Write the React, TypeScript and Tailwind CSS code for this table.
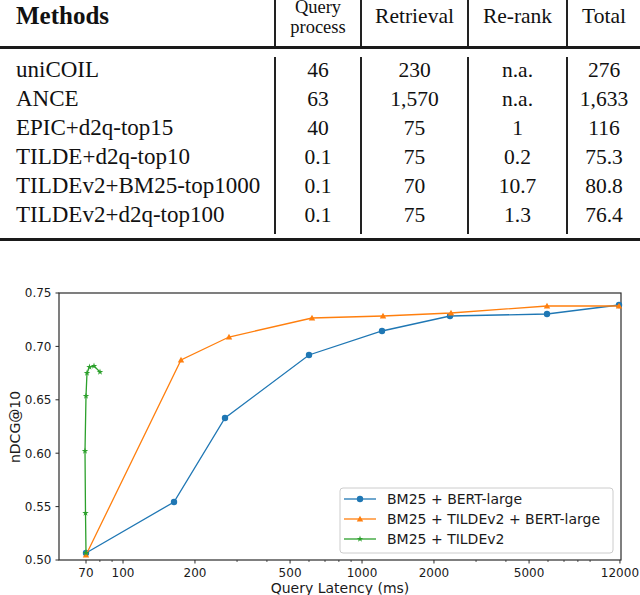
import React from "react";

const rows: string[][] = [
  ["uniCOIL", "46", "230", "n.a.", "276"],
  ["ANCE", "63", "1,570", "n.a.", "1,633"],
  ["EPIC+d2q-top15", "40", "75", "1", "116"],
  ["TILDE+d2q-top10", "0.1", "75", "0.2", "75.3"],
  ["TILDEv2+BM25-top1000", "0.1", "70", "10.7", "80.8"],
  ["TILDEv2+d2q-top100", "0.1", "75", "1.3", "76.4"],
];

const serif = { fontFamily: '"Liberation Serif", "DejaVu Serif", serif' };
const sans = '"DejaVu Sans", "Liberation Sans", sans-serif';

const X = (v: number) => 86 + 239 * Math.log10(v / 70);
const Y = (v: number) => 560 - ((v - 0.5) / 0.25) * 267;

const BLUE = "#1f77b4";
const ORANGE = "#ff7f0e";
const GREEN = "#2ca02c";

const blue: [number, number][] = [
  [86, 553], [174, 502], [225, 418], [309, 355], [382, 331], [450, 316], [547, 314], [619, 305],
];
const orange: [number, number][] = [
  [86, 555], [181, 360], [229, 337], [312, 318], [383, 316], [451, 313], [547, 306], [619, 306],
];
const green: [number, number][] = [
  [86, 553], [85.5, 513], [85, 451], [86, 396], [87, 373], [89.5, 367], [94, 366], [100, 372],
];

function starPts(cx: number, cy: number, R: number) {
  const pts: string[] = [];
  for (let i = 0; i < 10; i++) {
    const a = ((-90 + i * 36) * Math.PI) / 180;
    const r = i % 2 ? R * 0.382 : R;
    pts.push(`${(cx + r * Math.cos(a)).toFixed(2)},${(cy + r * Math.sin(a)).toFixed(2)}`);
  }
  return pts.join(" ");
}

function triPts(cx: number, cy: number, s: number) {
  return `${cx},${cy - s} ${cx + s},${cy + s * 0.8} ${cx - s},${cy + s * 0.8}`;
}

const path = (p: [number, number][]) => p.map((q, i) => `${i ? "L" : "M"}${q[0]},${q[1]}`).join(" ");

function Chart() {
  const yTicks = [0.5, 0.55, 0.6, 0.65, 0.7, 0.75];
  const xMajor = [70, 100, 200, 500, 1000, 2000, 5000, 12000];
  const xMinor = [80, 90, 300, 400, 600, 700, 800, 900, 3000, 4000, 6000, 7000, 8000, 9000];
  return (
    <svg width={640} height={354} viewBox="0 241 640 354" className="block">
      <rect x={59} y={293} width={562} height={267} fill="white" stroke="#2a2a2a" strokeWidth={1.2} />
      {yTicks.map((t) => (
        <g key={t}>
          <line x1={55.5} x2={59} y1={Y(t)} y2={Y(t)} stroke="#2a2a2a" strokeWidth={1} />
          <text x={51.5} y={Y(t) + 4.3} textAnchor="end" fontFamily={sans} fontSize={12} fill="#1a1a1a">
            {t.toFixed(2)}
          </text>
        </g>
      ))}
      {xMajor.map((t) => (
        <g key={t}>
          <line x1={X(t)} x2={X(t)} y1={560} y2={563.5} stroke="#2a2a2a" strokeWidth={1} />
          <text x={X(t)} y={576.5} textAnchor="middle" fontFamily={sans} fontSize={12} fill="#1a1a1a">
            {t}
          </text>
        </g>
      ))}
      {xMinor.map((t) => (
        <line key={t} x1={X(t)} x2={X(t)} y1={560} y2={562} stroke="#2a2a2a" strokeWidth={0.8} />
      ))}
      <text x={340} y={593} textAnchor="middle" fontFamily={sans} fontSize={14} fill="#1a1a1a">
        Query Latency (ms)
      </text>
      <text
        transform="translate(19.5,427) rotate(-90)"
        textAnchor="middle"
        fontFamily={sans}
        fontSize={14}
        fill="#1a1a1a"
      >
        nDCG@10
      </text>

      <path d={path(blue)} fill="none" stroke={BLUE} strokeWidth={1.3} />
      {blue.map((p, i) => (
        <circle key={i} cx={p[0]} cy={p[1]} r={3.2} fill={BLUE} />
      ))}
      <path d={path(orange)} fill="none" stroke={ORANGE} strokeWidth={1.3} />
      {orange.map((p, i) => (
        <polygon key={i} points={triPts(p[0], p[1], 3.2)} fill={ORANGE} />
      ))}
      <path d={path(green)} fill="none" stroke={GREEN} strokeWidth={1.3} />
      {green.map((p, i) => (
        <polygon key={i} points={starPts(p[0], p[1], 3.4)} fill={GREEN} />
      ))}

      <rect x={340} y={488} width={273} height={65} rx={3} fill="white" fillOpacity={0.85} stroke="#cccccc" strokeWidth={1} />
      <line x1={344} x2={376} y1={499} y2={499} stroke={BLUE} strokeWidth={1.3} />
      <circle cx={360} cy={499} r={3.2} fill={BLUE} />
      <text x={387} y={503.5} fontFamily={sans} fontSize={14} fill="#1a1a1a">BM25 + BERT-large</text>
      <line x1={344} x2={376} y1={519} y2={519} stroke={ORANGE} strokeWidth={1.3} />
      <polygon points={triPts(360, 519, 3.2)} fill={ORANGE} />
      <text x={387} y={523.5} fontFamily={sans} fontSize={14} fill="#1a1a1a">BM25 + TILDEv2 + BERT-large</text>
      <line x1={344} x2={376} y1={539} y2={539} stroke={GREEN} strokeWidth={1.3} />
      <polygon points={starPts(360, 539, 3.4)} fill={GREEN} />
      <text x={387} y={543.5} fontFamily={sans} fontSize={14} fill="#1a1a1a">BM25 + TILDEv2</text>
    </svg>
  );
}

function Table() {
  const numCols = [1, 2, 3, 4];
  const widths = ["w-[86px]", "w-[107px]", "w-[99px]", "w-[74px]"];
  return (
    <div style={serif} className="text-[#111]">
      {/* header */}
      <div className="flex h-[49px] border-b-[3px] border-[#1a1a1a] overflow-visible">
        <div className="w-[274px] pl-[16px] pt-[3px] text-[25px] leading-none font-bold">Methods</div>
        <div className="w-[86px] border-l-2 border-[#222] flex flex-col items-center text-[18.5px] leading-[20px] -mt-[3px]">
          <span>Query</span>
          <span>process</span>
        </div>
        <div className="w-[107px] border-l-2 border-[#222] flex justify-center pt-[6px] text-[21.5px] leading-none">Retrieval</div>
        <div className="w-[99px] border-l-2 border-[#222] flex justify-center pt-[6px] text-[21.5px] leading-none">Re-rank</div>
        <div className="w-[74px] border-l-2 border-[#222] flex justify-center pt-[6px] text-[21.5px] leading-none">Total</div>
      </div>
      {/* body */}
      <div className="pt-[8px] pb-[4px] border-b-[3px] border-[#1a1a1a]">
        <div className="flex h-[177px]">
          <div className="w-[274px] flex flex-col">
            {rows.map((r) => (
              <div key={r[0]} className="h-[29px] pl-[16px] text-[23px] leading-[26px] whitespace-nowrap">
                {r[0]}
              </div>
            ))}
          </div>
          {numCols.map((c, ci) => (
            <div key={c} className={`${widths[ci]} border-l-2 border-[#222] flex flex-col`}>
              {rows.map((r) => (
                <div key={r[0]} className="h-[29px] text-center text-[21.5px] leading-[26px]">
                  {r[c]}
                </div>
              ))}
            </div>
          ))}
        </div>
      </div>
    </div>
  );
}

export default function App() {
  return (
    <div className="w-[640px] h-[595px] overflow-hidden bg-white">
      <Table />
      <Chart />
    </div>
  );
}
